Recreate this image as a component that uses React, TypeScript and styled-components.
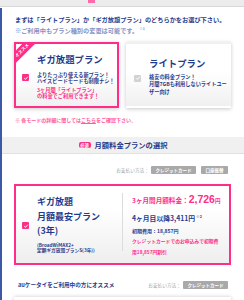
import styled, { createGlobalStyle } from 'styled-components';

const navy = '#1f3b8c';
const pink = '#ff2d88';

const GlobalStyle = createGlobalStyle`
  html, body {
    margin: 0;
    padding: 0;
    background: #fff;
    overflow: hidden;
  }
  body {
    font-family: "Noto Sans CJK JP", "Noto Sans", sans-serif;
    color: ${navy};
  }
`;

const Root = styled.div`
  width: 244px;
  height: 300px;
  overflow: hidden;
`;

const TopBar = styled.div`
  height: 6px;
  display: flex;
  background: #ececec;
  border-bottom: 1px solid #d8d8d8;
`;

const TopTab = styled.span`
  margin-left: 88px;
  width: 7px;
  height: 3px;
  background: #ff6aa8;
`;

const Page = styled.main`
  margin-top: 1px;
  border-left: 2px solid #3c59a8;
  min-height: 300px;
`;

const Content = styled.div`
  padding: 0 13px 0 12px;
`;

const Intro = styled.div`
  padding: 6.5px 0 0 1px;
  white-space: nowrap;
`;

const IntroLine = styled.p<{ $muted?: boolean }>`
  margin: 0;
  font-size: 6.2px;
  line-height: 9px;
  font-weight: 700;
  color: ${p => (p.$muted ? '#8492c4' : navy)};
`;

const Sup = styled.sup`
  font-size: 3.6px;
  vertical-align: 3px;
  margin-left: 1px;
`;

const CardRow = styled.div`
  margin-top: 7.5px;
  display: grid;
  grid-template-columns: 1fr 1fr;
  gap: 7px;
`;

const PlanCard = styled.div<{ $selected?: boolean }>`
  position: relative;
  overflow: hidden;
  box-sizing: border-box;
  height: 66px;
  padding: 2px 6px 0;
  display: flex;
  flex-direction: column;
  justify-content: center;
  border: 2px solid ${p => (p.$selected ? pink : 'transparent')};
  background: linear-gradient(#ffffff 45%, #f0f0f0);
  box-shadow: 0 1px 4px rgba(0, 0, 0, 0.22);
`;

const Ribbon = styled.div`
  position: absolute;
  left: -14px;
  top: 1.5px;
  width: 40px;
  height: 9px;
  transform: rotate(-45deg);
  background: ${pink};
  color: #fff;
  font-size: 4.4px;
  font-weight: 700;
  line-height: 9px;
  text-align: center;
`;

const PlanTitle = styled.div<{ $mb: number }>`
  padding-left: 15px;
  margin-bottom: ${p => p.$mb}px;
  font-size: 9.4px;
  line-height: 12px;
  font-weight: 700;
  white-space: nowrap;
`;

const PlanBody = styled.div`
  display: grid;
  grid-template-columns: 7px 1fr;
  column-gap: 8px;
  align-items: start;
`;

const Check = styled.span<{ $on?: boolean }>`
  width: 7px;
  height: 7px;
  margin-top: 2px;
  border-radius: 1px;
  display: flex;
  align-items: center;
  justify-content: center;
  background: ${p => (p.$on ? pink : '#d2d2d2')};
`;

const PlanText = styled.p<{ $lh: number; $pink?: boolean; $mt?: number }>`
  margin: ${p => p.$mt ?? 0}px 0 0;
  font-size: 5.2px;
  line-height: ${p => p.$lh}px;
  font-weight: 700;
  white-space: nowrap;
  color: ${p => (p.$pink ? pink : navy)};
`;

const Note = styled.p`
  margin: 7.5px 0 0 1px;
  font-size: 5px;
  line-height: 7px;
  font-weight: 700;
  color: #ff5c9d;
  white-space: nowrap;

  & > u {
    text-underline-offset: 1px;
  }
`;

const SectionBar = styled.div`
  margin-top: 14.5px;
  height: 17px;
  display: flex;
  align-items: center;
  justify-content: center;
  gap: 4px;
  background: #f0f0f0;
  border-bottom: 1px solid #e0e0e0;
  box-sizing: border-box;
`;

const RequiredBadge = styled.span`
  width: 12px;
  height: 6px;
  border-radius: 2px;
  background: ${pink};
  color: #fff;
  font-size: 4.2px;
  font-weight: 700;
  line-height: 6px;
  text-align: center;
`;

const SectionTitle = styled.span`
  font-size: 7.3px;
  font-weight: 700;
  line-height: 10px;
`;

const PayRow = styled.div<{ $mt: number; $between?: boolean }>`
  margin-top: ${p => p.$mt}px;
  height: 8px;
  padding: 0 3px 0 4px;
  display: flex;
  align-items: center;
  justify-content: ${p => (p.$between ? 'space-between' : 'flex-end')};
`;

const PayGroup = styled.div`
  display: flex;
  align-items: center;
  gap: 5px;
`;

const PayLabel = styled.span`
  margin-right: -3px;
  font-size: 4.7px;
  color: #a3a3a3;
  white-space: nowrap;
`;

const PayBadge = styled.span`
  height: 8px;
  padding: 0 4.5px;
  border-radius: 1px;
  background: #a9a9a9;
  color: #fff;
  font-size: 4.5px;
  font-weight: 700;
  line-height: 8px;
  white-space: nowrap;
`;

const AuText = styled.span`
  font-size: 5.6px;
  font-weight: 700;
  white-space: nowrap;
`;

const PriceCard = styled.div`
  margin-top: 10px;
  padding: 6px 6px;
  display: flex;
  align-items: center;
  border: 2px solid ${pink};
  background: linear-gradient(#ffffff 30%, #eeeeee);
`;

const PriceName = styled.div`
  margin-left: 8px;
  width: 80px;
`;

const NameLine = styled.div`
  font-size: 9px;
  line-height: 14.5px;
  font-weight: 700;
  white-space: nowrap;
`;

const NameSub = styled.div`
  margin-top: 4px;
  font-size: 4.7px;
  line-height: 5.5px;
  font-weight: 700;
  white-space: nowrap;
`;

const Divider = styled.span`
  align-self: stretch;
  width: 1px;
  margin: 1px 9px 6px 5px;
  background: #dcdcdc;
`;

const PriceInfo = styled.div`
  flex: 1;
  white-space: nowrap;
`;

const PriceRow = styled.div<{ $size: number; $lh: number; $pink?: boolean }>`
  font-size: ${p => p.$size}px;
  line-height: ${p => p.$lh}px;
  font-weight: 700;
  color: ${p => (p.$pink ? pink : navy)};
`;

const Price = styled.span`
  font-size: 10.5px;
  font-family: "Liberation Sans", Arial, sans-serif;
`;

const Yen = styled.span`
  font-size: 5.5px;
`;

const NextCard = styled.div`
  margin-top: 8px;
  height: 40px;
  background: #fff;
  box-shadow: 0 0 4px rgba(0, 0, 0, 0.22);
`;

const CheckMark = () => (
  <svg width="6" height="6" viewBox="0 0 6 6">
    <path d="M1.2 3.1 L2.5 4.4 L4.9 1.6" fill="none" stroke="#fff" strokeWidth="0.9" />
  </svg>
);

const App = () => (
  <Root>
    <GlobalStyle />
    <TopBar>
      <TopTab />
    </TopBar>
    <Page>
      <Content>
        <Intro>
          <IntroLine>まずは「ライトプラン」か「ギガ放題プラン」のどちらかをお選び下さい。</IntroLine>
          <IntroLine $muted>
            ※ご利用中もプラン種別の変更は可能です。<Sup>※1</Sup>
          </IntroLine>
        </Intro>

        <CardRow>
          <PlanCard $selected>
            <Ribbon>オススメ</Ribbon>
            <PlanTitle $mb={7.6}>ギガ放題プラン</PlanTitle>
            <PlanBody>
              <Check $on>
                <CheckMark />
              </Check>
              <div>
                <PlanText $lh={6}>
                  よりたっぷり使える新プラン！
                  <br />
                  ハイスピードモードも制限ナシ！
                </PlanText>
                <PlanText $lh={6} $mt={3.3} $pink>
                  3ヶ月間「ライトプラン」
                  <br />
                  の料金でご利用できます！
                </PlanText>
              </div>
            </PlanBody>
          </PlanCard>

          <PlanCard>
            <PlanTitle $mb={3.5}>ライトプラン</PlanTitle>
            <PlanBody>
              <Check>
                <CheckMark />
              </Check>
              <PlanText $lh={7.5}>
                格安の料金プラン！
                <br />
                月間7GBも利用しないライトユー
                <br />
                ザー向け
              </PlanText>
            </PlanBody>
          </PlanCard>
        </CardRow>

        <Note>
          ※ 各モードの詳細に関しては<u>こちら</u>をご確認下さい。
        </Note>
      </Content>

      <SectionBar>
        <RequiredBadge>必須</RequiredBadge>
        <SectionTitle>月額料金プランの選択</SectionTitle>
      </SectionBar>

      <Content>
        <PayRow $mt={12}>
          <PayGroup>
            <PayLabel>お支払い方法：</PayLabel>
            <PayBadge>クレジットカード</PayBadge>
            <PayBadge>口座振替</PayBadge>
          </PayGroup>
        </PayRow>

        <PriceCard>
          <Check $on>
            <CheckMark />
          </Check>
          <PriceName>
            <NameLine>
              ギガ放題
              <br />
              月額最安プラン
              <br />
              (3年)
            </NameLine>
            <NameSub>
              (BroadWiMAX2+
              <br />
              定額ギガ放題プランS(3年))
            </NameSub>
          </PriceName>
          <Divider />
          <PriceInfo>
            <PriceRow $size={6.6} $lh={15} $pink>
              3ヶ月間月額料金：<Price>2,726</Price>
              <Yen>円</Yen>
            </PriceRow>
            <PriceRow $size={6.8} $lh={15}>
              4ヶ月目以降3,411円<Sup>※2</Sup>
            </PriceRow>
            <PriceRow $size={5} $lh={10}>
              初期費用：18,857円
            </PriceRow>
            <PriceRow $size={4.8} $lh={10.5} $pink>
              クレジットカードでのお申込みで初期費
              <br />
              用18,857円割引
            </PriceRow>
          </PriceInfo>
        </PriceCard>

        <PayRow $mt={16} $between>
          <AuText>auケータイをご利用中の方にオススメ</AuText>
          <PayGroup>
            <PayLabel>お支払い方法：</PayLabel>
            <PayBadge>クレジットカード</PayBadge>
          </PayGroup>
        </PayRow>

        <NextCard />
      </Content>
    </Page>
  </Root>
);

export default App;
